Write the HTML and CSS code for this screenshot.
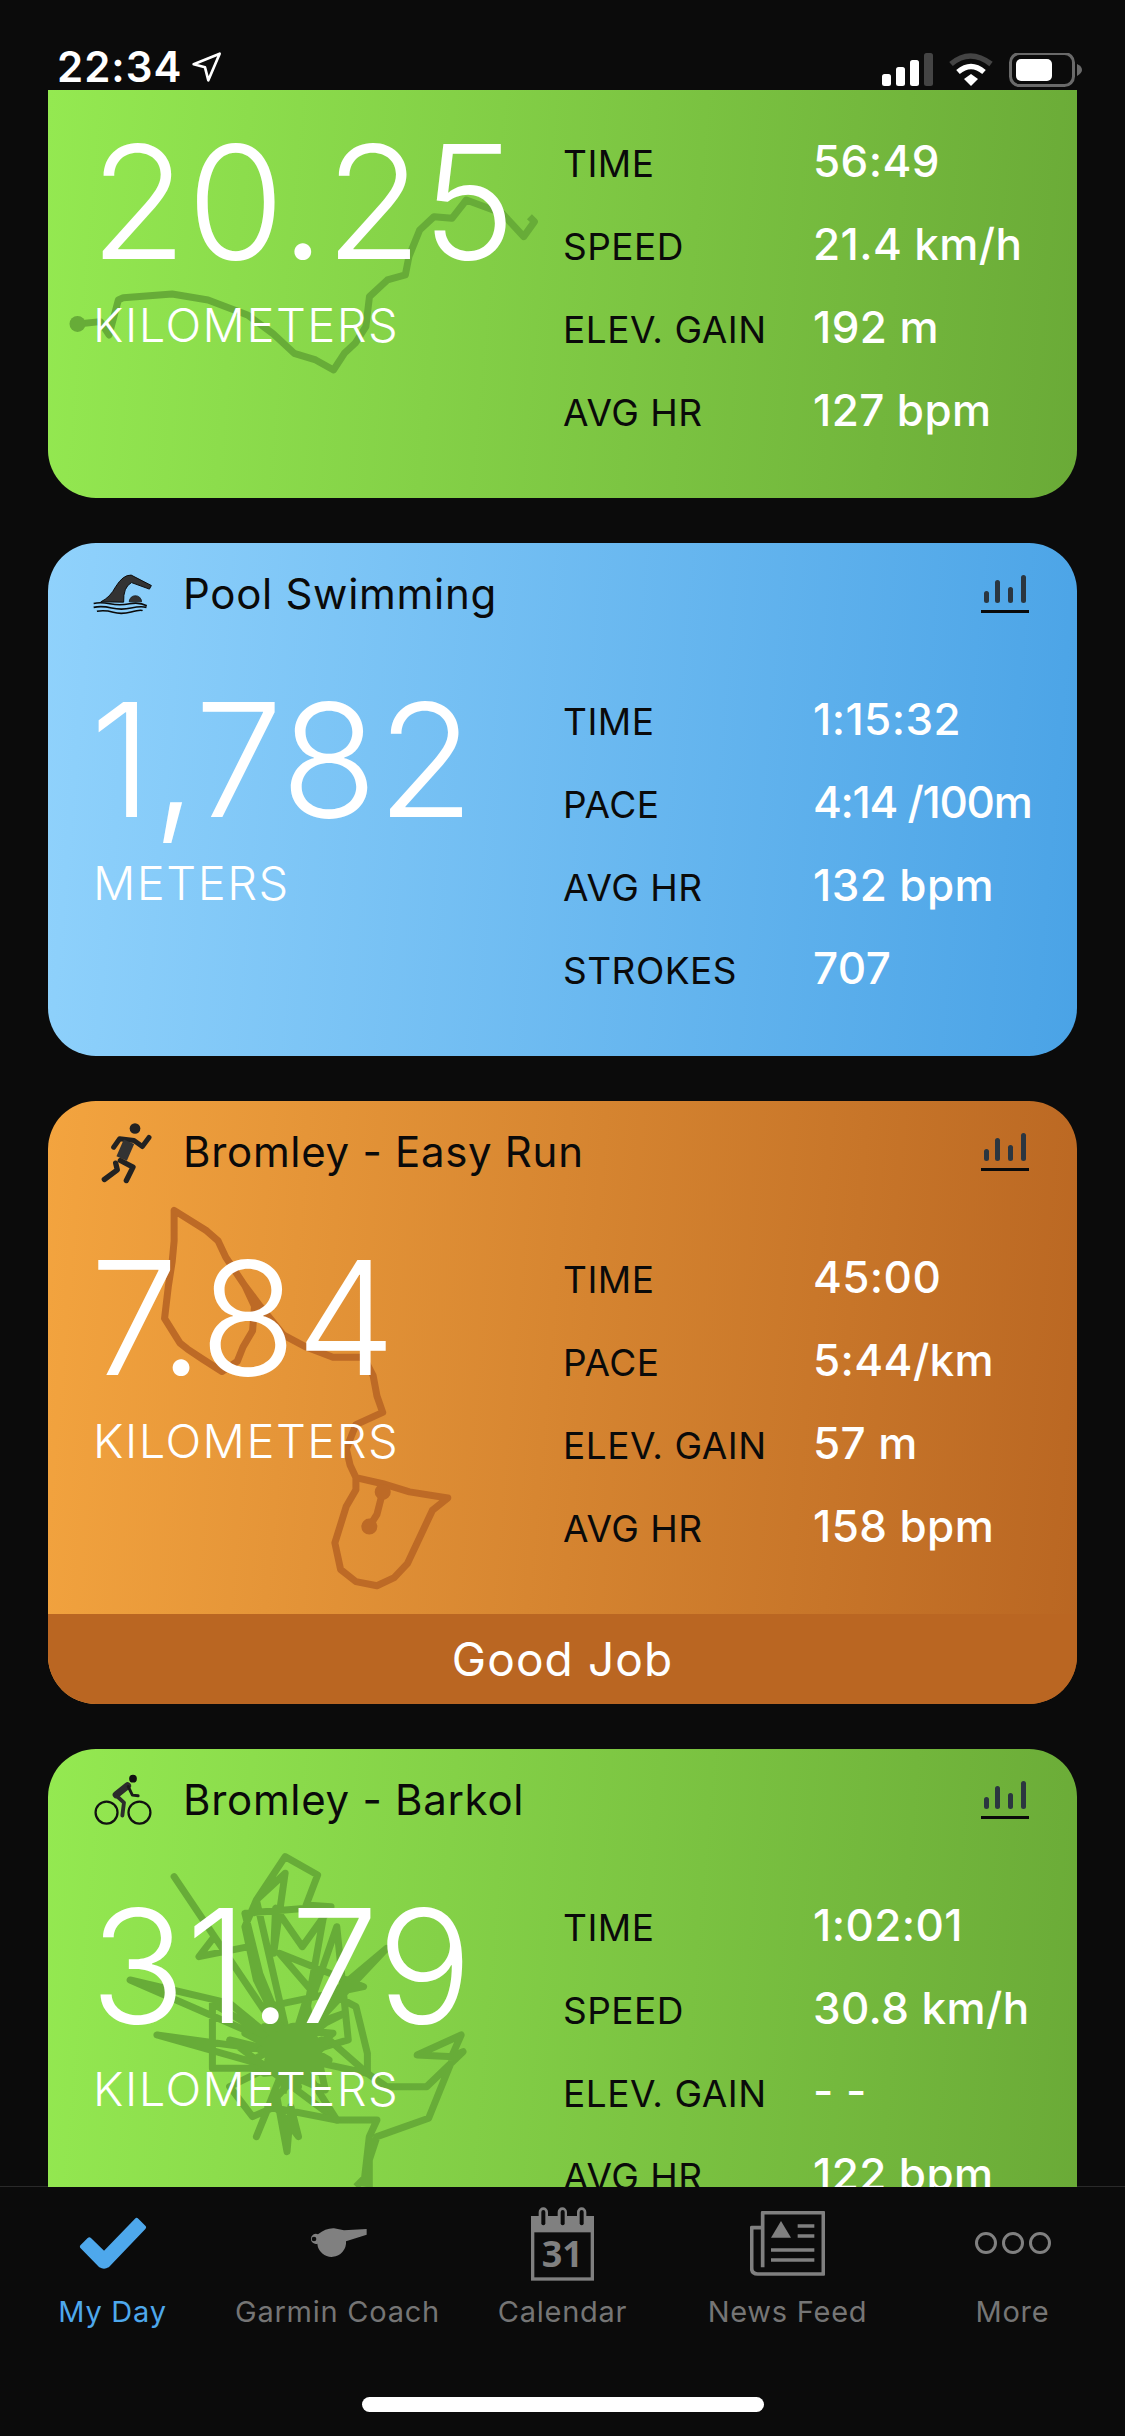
FILE: index.html
```html
<!DOCTYPE html>
<html>
<head>
  <title>My Day</title>
  <link rel="stylesheet" href="styles.css">
</head>
<body>
  <svg class="defs" width="0" height="0">
    <symbol id="chart" viewBox="0 0 48 38">
      <rect x="3" y="16" width="5" height="12" rx="2.5" fill="#2b3640"/>
      <rect x="14" y="5" width="5" height="23" rx="2.5" fill="#2b3640"/>
      <rect x="27" y="12" width="5" height="16" rx="2.5" fill="#2b3640"/>
      <rect x="40" y="0" width="5" height="28" rx="2.5" fill="#2b3640"/>
      <rect x="0" y="35" width="48" height="3" fill="#0a0a0a"/>
    </symbol>
  </svg>

  <header class="status-bar">
    <div class="status-time">
      <span>22:34</span>
      <svg class="status-arrow" viewBox="575 158 96 96">
        <path d="M586 198 L664 166 L630 246 L620 207 Z" fill="none" stroke="#fff" stroke-width="8" stroke-linejoin="round"/>
      </svg>
    </div>
    <svg class="status-icons" viewBox="0 0 200 34">
      <rect x="0" y="21" width="9" height="12" rx="2.5" fill="#fff"/>
      <rect x="14" y="14" width="9" height="19" rx="2.5" fill="#fff"/>
      <rect x="28" y="7" width="9" height="26" rx="2.5" fill="#fff"/>
      <rect x="42" y="0" width="9" height="33" rx="2.5" fill="#444"/>
      <path d="M69 11 Q88 -5 109 11" fill="none" stroke="#444" stroke-width="5.5"/>
      <path d="M76 19 Q89 8 102 19" fill="none" stroke="#fff" stroke-width="5.5"/>
      <path d="M82 26 L89 21 L96 26 L89 33 Z" fill="#fff"/>
      <rect x="128.5" y="0.5" width="63" height="32" rx="9" fill="none" stroke="#6a6a6a" stroke-width="3"/>
      <rect x="134" y="6" width="36" height="22" rx="5" fill="#fff"/>
      <path d="M195 11 Q200 13 200 17 Q200 20 195 23 Z" fill="#6a6a6a"/>
    </svg>
  </header>

  <main class="feed">
    <section class="card card-green card-clipped">
      <svg class="route" viewBox="48 90 1029 408">
        <g transform="scale(.7174 .3333)">
          <path class="route-line" d="M108 972 L140 965 L152 1005 L165 900 L172 893 L240 882 L290 900 L345 945 L380 1000 L410 1060 L440 1080 L465 1110 L480 1060 L495 1030 L510 980 L515 890 L540 840 L565 825 L570 770 L585 690 L605 650 L630 655 L650 600 L700 640 L730 710 L745 665 L738 650"/>
          <path class="route-dot" d="M108 972 h.1"/>
        </g>
      </svg>
      <div class="card-body">
        <div class="total">
          <div class="total-number">20.25</div>
          <div class="total-unit">KILOMETERS</div>
        </div>
        <div class="stats">
          <div class="stat"><span class="stat-label">TIME</span><span class="stat-value">56:49</span></div>
          <div class="stat"><span class="stat-label">SPEED</span><span class="stat-value">21.4 km/h</span></div>
          <div class="stat"><span class="stat-label">ELEV. GAIN</span><span class="stat-value">192 m</span></div>
          <div class="stat"><span class="stat-label">AVG HR</span><span class="stat-value">127 bpm</span></div>
        </div>
      </div>
    </section>

    <section class="card card-blue">
      <div class="card-head">
        <svg class="sport-icon" viewBox="98 68 184 126">
          <path d="M122 155 Q150 142 168 108 Q190 72 215 73 L277 105 L271 116 L216 96 Q190 110 192 156 Z" fill="#333" stroke="#0a0a0a" stroke-width="3" stroke-linejoin="round"/>
          <path d="M209 155 A19 19 0 0 1 247 155 Z" fill="#333" stroke="#0a0a0a" stroke-width="2"/>
          <path d="M100 160 Q120 155 150 161 T210 161 T263 167 M100 172 Q125 167 155 174 T215 174 T262 172 M110 184 Q135 180 160 187 T215 186 T250 182" fill="none" stroke="#0a0a0a" stroke-width="5"/>
        </svg>
        <h2 class="card-title">Pool Swimming</h2>
        <svg class="chart-icon"><use href="#chart"/></svg>
      </div>
      <div class="card-body">
        <div class="total">
          <div class="total-number">1,782</div>
          <div class="total-unit">METERS</div>
        </div>
        <div class="stats">
          <div class="stat"><span class="stat-label">TIME</span><span class="stat-value">1:15:32</span></div>
          <div class="stat"><span class="stat-label">PACE</span><span class="stat-value stat-value-tight">4:14 /100m</span></div>
          <div class="stat"><span class="stat-label">AVG HR</span><span class="stat-value">132 bpm</span></div>
          <div class="stat"><span class="stat-label">STROKES</span><span class="stat-value">707</span></div>
        </div>
      </div>
    </section>

    <section class="card card-orange">
      <svg class="route" viewBox="48 1101 1029 603">
        <g transform="translate(0 1090) scale(.3827 .408)">
          <path class="route-line" d="M455 295 L455 370 L450 420 L440 480 L430 560 L470 620 L490 635 L530 660 L580 690 L620 665 L635 630 L660 590 L665 530 L640 480 L590 410 L570 370 L540 345 Z M640 480 L680 530 L740 600 L800 630 L870 655 L950 655 L975 700 L985 750 L1000 790 L930 820 L905 880 L915 920 L930 950 L1000 965 L1070 985 L1170 1000 L1130 1030 L1100 1090 L1065 1160 L1030 1195 L985 1215 L930 1205 L890 1175 L875 1110 L905 1020 L930 980 L930 950"/>
          <path class="route-line" d="M1000 985 L985 1040 L965 1070"/>
          <path class="route-dot" d="M1000 985 h.1 M965 1070 h.1"/>
        </g>
      </svg>
      <div class="card-head">
        <svg class="sport-icon" viewBox="90 60 180 185">
          <circle cx="216" cy="82" r="16" fill="#222"/>
          <path d="M152 138 L170 113 L213 118 L238 136 L258 109" fill="none" stroke="#222" stroke-width="15" stroke-linecap="round" stroke-linejoin="round"/>
          <path d="M198 122 L176 172" fill="none" stroke="#333" stroke-width="34"/>
          <path d="M172 178 L210 198 L190 238" fill="none" stroke="#222" stroke-width="16" stroke-linecap="round" stroke-linejoin="round"/>
          <path d="M158 186 L163 206 L124 235" fill="none" stroke="#222" stroke-width="16" stroke-linecap="round" stroke-linejoin="round"/>
        </svg>
        <h2 class="card-title">Bromley - Easy Run</h2>
        <svg class="chart-icon"><use href="#chart"/></svg>
      </div>
      <div class="card-body">
        <div class="total">
          <div class="total-number">7.84</div>
          <div class="total-unit">KILOMETERS</div>
        </div>
        <div class="stats">
          <div class="stat"><span class="stat-label">TIME</span><span class="stat-value">45:00</span></div>
          <div class="stat"><span class="stat-label">PACE</span><span class="stat-value">5:44/km</span></div>
          <div class="stat"><span class="stat-label">ELEV. GAIN</span><span class="stat-value">57 m</span></div>
          <div class="stat"><span class="stat-label">AVG HR</span><span class="stat-value">158 bpm</span></div>
        </div>
      </div>
      <div class="card-band">Good Job</div>
    </section>

    <section class="card card-green">
      <svg class="route" viewBox="48 1749 1029 513">
        <g transform="translate(0 1740) scale(.3827 .3333)">
          <path class="route-line" d="M930 1340 L965 1300 L965 1340 L965 1260 L985 1190 L1120 1135 L1185 950 L1090 945 L1205 885 L1180 950 L1210 935 L1115 1040 L1010 1040 L960 1000 L960 940 L930 800 L880 770 L760 930 L670 480 L745 350 L830 405 L800 495 L865 500 L790 620 L720 505 L715 640 L745 400 L670 480 L640 560 L670 720 L760 930 L455 410 L560 590 L520 650 L650 620 L760 930 L340 720 L600 790 L760 940 L410 885 L720 985 L555 985 L555 790 L760 930 L1010 625 L870 760 L760 950 L910 900 L880 560 L820 760 L730 640 L950 740 L700 800 L640 520 L850 500 L780 950 L600 900 L880 1140 L985 1140 L965 1190 L950 1340"/>
          <path class="route-line" d="M760 930 L670 1190 L720 1050 L750 1235 L760 1100 L780 1190 L720 1100 L660 1130 L600 1040 L760 950 L960 1000 L860 900 L700 1100 L880 1140 L780 960 L640 880 L840 1000 L690 860 L870 880 L740 1000 L800 780 L850 1050 L660 960 L900 820 L700 900 L820 980 L720 840 L800 1020 L680 930 L860 960 L740 880 L780 1040 L700 960 L840 900 L760 1000 L720 920 L820 860 L790 990 L690 1000 L860 840 L760 860 L740 1060"/>
        </g>
      </svg>
      <div class="card-head">
        <svg class="sport-icon" viewBox="96 36 186 160">
          <circle cx="220" cy="50" r="12" fill="#111"/>
          <circle cx="138" cy="155" r="34" fill="none" stroke="#111" stroke-width="7"/>
          <circle cx="240" cy="155" r="34" fill="none" stroke="#111" stroke-width="7"/>
          <path d="M168 100 L203 72" fill="none" stroke="#2c2c2c" stroke-width="22" stroke-linecap="round"/>
          <path d="M205 74 L218 101 L236 103" fill="none" stroke="#1a1a1a" stroke-width="9" stroke-linecap="round" stroke-linejoin="round"/>
          <path d="M168 102 L192 124 L187 164" fill="none" stroke="#2c2c2c" stroke-width="12" stroke-linecap="round" stroke-linejoin="round"/>
        </svg>
        <h2 class="card-title">Bromley - Barkol</h2>
        <svg class="chart-icon"><use href="#chart"/></svg>
      </div>
      <div class="card-body">
        <div class="total">
          <div class="total-number">31.79</div>
          <div class="total-unit">KILOMETERS</div>
        </div>
        <div class="stats">
          <div class="stat"><span class="stat-label">TIME</span><span class="stat-value">1:02:01</span></div>
          <div class="stat"><span class="stat-label">SPEED</span><span class="stat-value">30.8 km/h</span></div>
          <div class="stat"><span class="stat-label">ELEV. GAIN</span><span class="stat-value">- -</span></div>
          <div class="stat"><span class="stat-label">AVG HR</span><span class="stat-value">122 bpm</span></div>
        </div>
      </div>
    </section>
  </main>

  <footer class="tab-bar">
    <nav class="tabs">
      <div class="tab tab-active">
        <div class="tab-icon">
          <svg width="70" height="54" viewBox="234 78 210 162">
            <path d="M247 170 L268 149 L312 192 L410 91 L431 112 L322 226 Q312 232 302 226 Z" fill="#4ea8ec" stroke="#4ea8ec" stroke-width="14" stroke-linejoin="round"/>
          </svg>
        </div>
        <span class="tab-label">My Day</span>
      </div>
      <div class="tab">
        <div class="tab-icon">
          <svg width="58" height="31" viewBox="925 115 174 93">
            <path fill-rule="evenodd" d="M1098 118 V135 L1036 155 A43 43 0 1 1 950 162 A15 15 0 1 1 952 134 Q975 115 1000 116 L1030 122 Z M940 141 A7 7 0 1 0 940.1 155 A7 7 0 1 0 940 141 Z" fill="#808080"/>
          </svg>
        </div>
        <span class="tab-label">Garmin Coach</span>
      </div>
      <div class="tab">
        <div class="tab-icon">
          <svg width="63" height="75" viewBox="153 48 189 225">
            <path d="M153 78 H176 V66 A14 14 0 0 1 204 66 V78 H233 V66 A14 14 0 0 1 261 66 V78 H291 V66 A14 14 0 0 1 319 66 V78 H342 V122 H153 Z" fill="#808080"/>
            <rect x="184" y="60" width="12" height="46" rx="6" fill="#0b0b0b"/>
            <rect x="242" y="60" width="12" height="46" rx="6" fill="#0b0b0b"/>
            <rect x="299" y="60" width="12" height="46" rx="6" fill="#0b0b0b"/>
            <rect x="158" y="122" width="179" height="145" fill="none" stroke="#808080" stroke-width="10"/>
            <text class="calendar-day" x="247" y="230" text-anchor="middle">31</text>
          </svg>
        </div>
        <span class="tab-label">Calendar</span>
      </div>
      <div class="tab">
        <div class="tab-icon">
          <svg width="75" height="65" viewBox="807 66 225 195">
            <path d="M845 235 V71 H1027 V255 H830 Q812 255 812 238 V116 H840" fill="none" stroke="#808080" stroke-width="11" stroke-linejoin="round"/>
            <path d="M870 146 H930 L900 96 Z" fill="#808080"/>
            <path d="M950 111 H1000 M950 141 H1000 M870 183 H1000 M870 213 H1000" fill="none" stroke="#808080" stroke-width="11"/>
          </svg>
        </div>
        <span class="tab-label">News Feed</span>
      </div>
      <div class="tab">
        <div class="tab-icon">
          <svg width="76" height="22" viewBox="0 0 76 22">
            <circle cx="11" cy="11" r="9.5" fill="none" stroke="#808080" stroke-width="3"/>
            <circle cx="38" cy="11" r="9.5" fill="none" stroke="#808080" stroke-width="3"/>
            <circle cx="65" cy="11" r="9.5" fill="none" stroke="#808080" stroke-width="3"/>
          </svg>
        </div>
        <span class="tab-label">More</span>
      </div>
    </nav>
    <div class="home-bar"></div>
  </footer>
</body>
</html>
```

FILE: styles.css
```css
* {
  box-sizing: border-box;
}

body {
  margin: 0;
  width: 1125px;
  height: 2436px;
  overflow: hidden;
  display: flex;
  flex-direction: column;
  background-color: #0b0b0b;
  font-family: Inter, "Noto Sans", sans-serif;
  color: #fff;
}

.defs {
  position: absolute;
}

/* status bar */
.status-bar {
  height: 90px;
  flex-shrink: 0;
  display: flex;
  justify-content: space-between;
  align-items: flex-end;
  padding: 0 43px 3px 57px;
}

.status-time {
  display: flex;
  align-items: center;
  gap: 8px;
  font-size: 42px;
  font-weight: 600;
  line-height: 40px;
  letter-spacing: 1px;
}

.status-arrow {
  width: 32px;
  height: 32px;
}

.status-icons {
  width: 200px;
  height: 34px;
}

/* activity list */
.feed {
  position: relative;
  height: 2097px;
  flex-shrink: 0;
  overflow: hidden;
  display: flex;
  flex-direction: column;
  gap: 45px;
  padding: 0 48px;
}

.card {
  position: relative;
  flex-shrink: 0;
  overflow: hidden;
  border-radius: 48px;
}

.card-clipped {
  border-top-left-radius: 0;
  border-top-right-radius: 0;
}

.card-clipped .card-body {
  padding-top: 32px;
}

.card-green {
  background: linear-gradient(95deg, #94e951, #6aaa37);
}

.card-blue {
  background: linear-gradient(95deg, #90d2fc, #4aa3e6);
}

.card-orange {
  background: linear-gradient(95deg, #f3a43f, #b96622);
}

.route {
  position: absolute;
  top: 0;
  left: 0;
  width: 100%;
  height: 100%;
}

.route-line {
  fill: none;
  stroke-width: 7px;
  stroke-linejoin: round;
  vector-effect: non-scaling-stroke;
}

.route-dot {
  fill: none;
  stroke-width: 16px;
  stroke-linecap: round;
  vector-effect: non-scaling-stroke;
}

.card-green .route-line,
.card-green .route-dot {
  stroke: #67ac38;
}

.card-orange .route-line,
.card-orange .route-dot {
  stroke: #bd6a26;
}

.card-head {
  position: relative;
  height: 102px;
  display: flex;
  align-items: center;
  padding: 0 48px 0 45px;
  color: #0a0a0a;
}

.sport-icon {
  width: 60px;
  height: 66px;
  flex-shrink: 0;
}

.card-title {
  flex: 1;
  margin: 0 0 0 30px;
  font-size: 42px;
  font-weight: 400;
  line-height: 50px;
  letter-spacing: 0.7px;
}

.chart-icon {
  width: 48px;
  height: 38px;
}

.card-body {
  position: relative;
  display: flex;
  padding: 35px 0 44px;
}

.total {
  width: 515px;
  padding-left: 45px;
}

.total-number {
  margin-left: -3px;
  font-size: 158px;
  font-weight: 300;
  line-height: 160px;
  letter-spacing: 0;
}

.total-unit {
  margin-top: 18px;
  font-size: 47px;
  font-weight: 300;
  line-height: 50px;
  letter-spacing: 1.5px;
}

.stats {
  flex: 1;
}

.stat {
  height: 83px;
  display: flex;
  align-items: baseline;
  padding-top: 17px;
}

.stat-label {
  width: 250px;
  flex-shrink: 0;
  font-size: 37px;
  line-height: 44px;
  letter-spacing: 0.5px;
  color: #0a0a0a;
}

.stat-value {
  font-size: 44px;
  font-weight: 500;
  line-height: 44px;
  white-space: nowrap;
  letter-spacing: 0.4px;
}

.stat-value-tight {
  letter-spacing: -1.3px;
}

.card-band {
  position: relative;
  height: 90px;
  text-align: center;
  font-size: 46px;
  line-height: 90px;
  letter-spacing: 1.1px;
  background-color: #ba6622;
}

/* bottom tabs */
.tab-bar {
  flex: 1;
  display: flex;
  flex-direction: column;
  align-items: center;
  background-color: #0b0b0b;
  box-shadow: 0 -1px 0 #2a2a2a;
}

.tabs {
  width: 100%;
  display: grid;
  grid-template-columns: repeat(5, 1fr);
  padding-top: 11px;
}

.tab {
  display: flex;
  flex-direction: column;
  align-items: center;
  color: #757575;
}

.tab-active {
  color: #4ea8ec;
}

.tab-icon {
  height: 90px;
  display: flex;
  align-items: center;
}

.tab-label {
  margin-top: 6px;
  font-size: 29px;
  line-height: 36px;
  white-space: nowrap;
  letter-spacing: 0.75px;
}

.calendar-day {
  font-family: "Open Sans", sans-serif;
  font-size: 108px;
  font-weight: 700;
  fill: #808080;
}

.home-bar {
  width: 402px;
  height: 15px;
  margin-top: 67px;
  border-radius: 8px;
  background-color: #fff;
}
```
